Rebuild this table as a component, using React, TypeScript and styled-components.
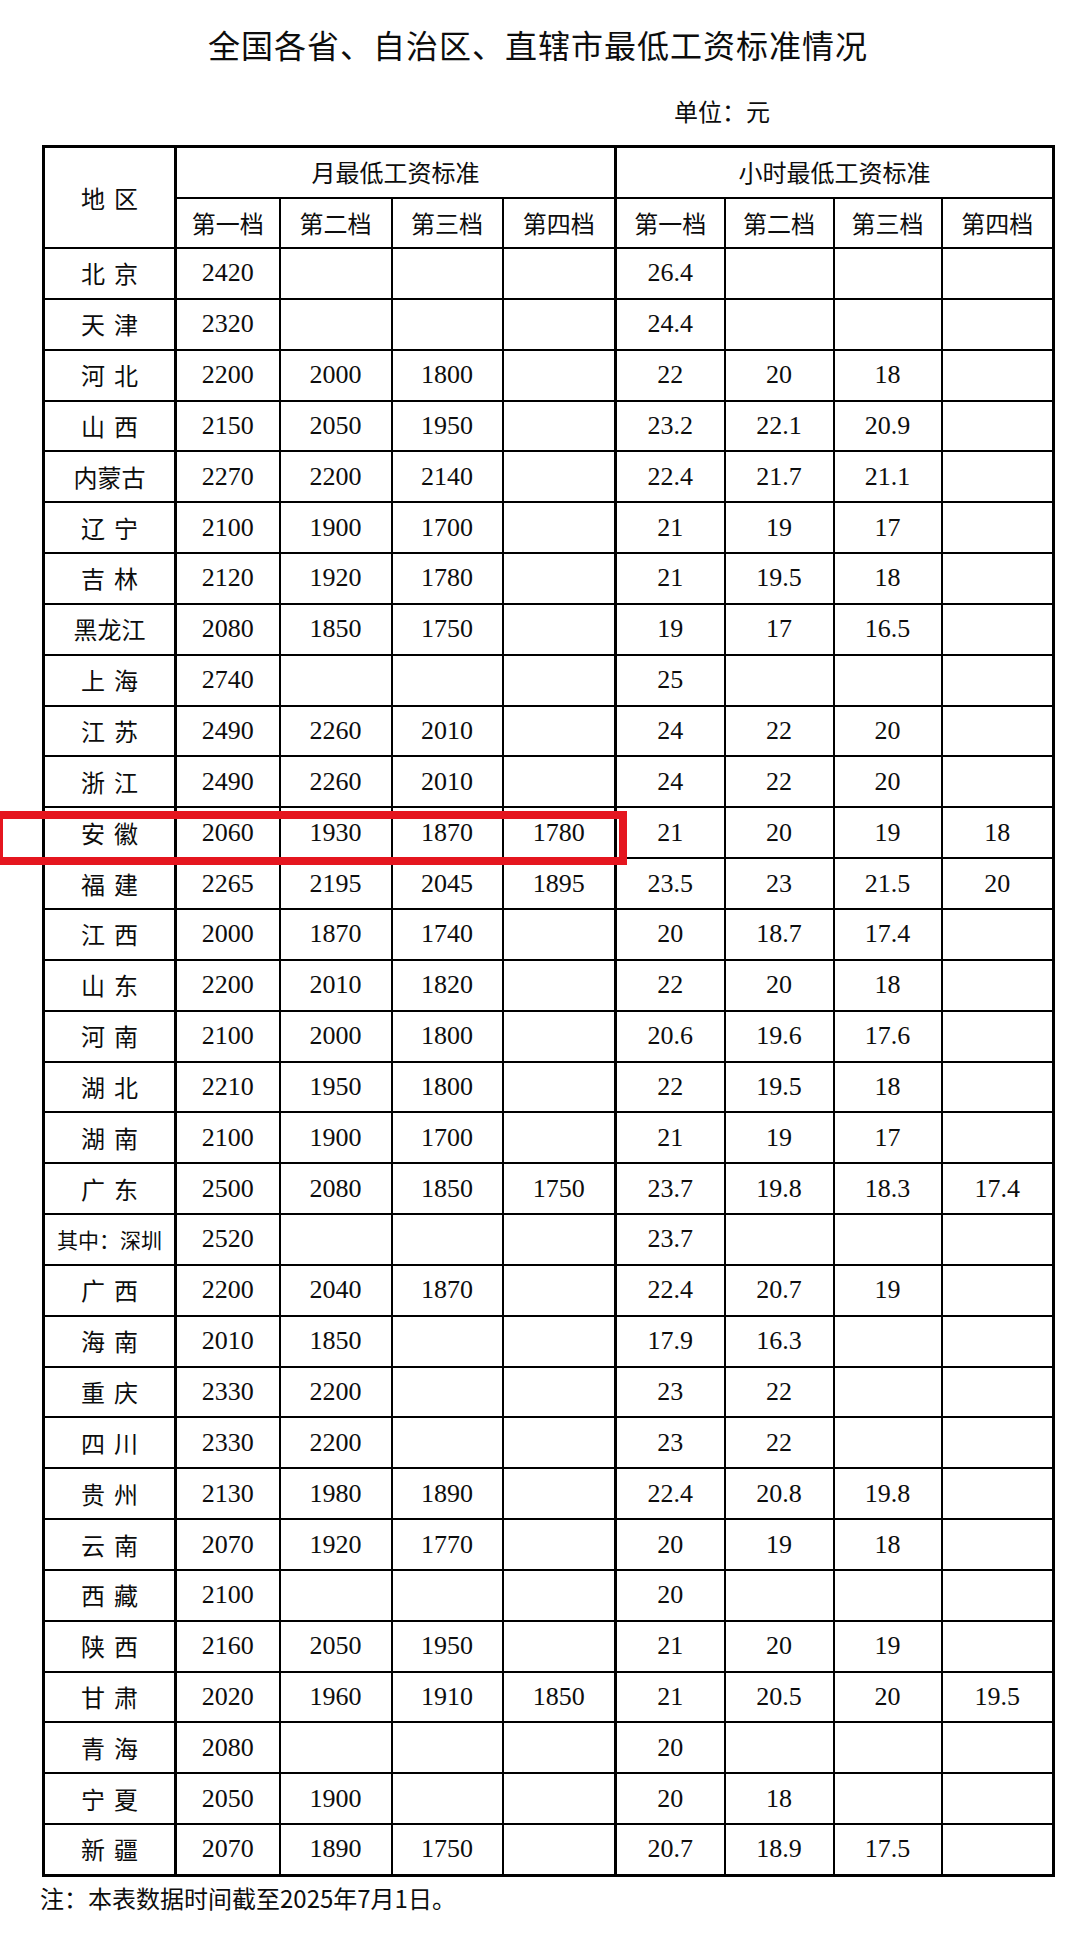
import React from "react";
import styled, { createGlobalStyle } from "styled-components";

const GlobalStyle = createGlobalStyle`
  html,
  body {
    margin: 0;
    padding: 0;
    background: #fff;
  }
`;

const cjk = `"Noto Sans CJK SC", "Noto Sans", sans-serif`;

const Page = styled.div`
  position: relative;
  width: 1076px;
  min-height: 1934px;
  background: #fff;
  color: #0d0d0d;
  font-family: ${cjk};
  overflow: hidden;
`;

const Title = styled.h1`
  margin: 0;
  padding-top: 24px;
  font: 400 32px/40px ${cjk};
  letter-spacing: 1px;
  text-align: center;
`;

const Unit = styled.div`
  margin-top: 32px;
  padding-left: 674px;
  font: 400 24px/30px ${cjk};
`;

const Table = styled.table`
  margin: 19px 0 0 42px;
  width: 1013px;
  border-collapse: collapse;
  table-layout: fixed;
  border: 3px solid #000;
`;

const HeadRow = styled.tr<{ $h: number }>`
  height: ${(p) => p.$h}px;
`;

const DataRow = styled.tr`
  height: 50.85px;
`;

const Cell = styled.td<{ $sep?: boolean }>`
  padding: 0;
  border: 2px solid #000;
  ${(p) => (p.$sep ? "border-right-width: 3px;" : "")}
  text-align: center;
  vertical-align: middle;
  line-height: 1;
  white-space: nowrap;
`;

const HeadCell = styled(Cell)`
  font: 400 24px/1 ${cjk};
`;

const RegionCell = styled(Cell)<{ $spaced?: boolean; $small?: boolean }>`
  font: 400 ${(p) => (p.$small ? 21 : 24)}px/1 ${cjk};
  letter-spacing: ${(p) => (p.$spaced ? "9px" : "0")};
  padding-left: ${(p) => (p.$spaced ? "9px" : "0")};
`;

const NumCell = styled(Cell)`
  font: 400 26px/1 "Liberation Serif", "Times New Roman", serif;
`;

const Highlight = styled.div`
  position: absolute;
  left: -5px;
  top: 811px;
  width: 632px;
  height: 54px;
  box-sizing: border-box;
  border: 8px solid #e5161f;
  pointer-events: none;
`;

const Note = styled.p`
  margin: 6px 0 0;
  padding-left: 40px;
  font: 400 24px/30px ${cjk};
`;

type Row = [string, string[], string[]];

const rows: Row[] = [
  ["北京", ["2420"], ["26.4"]],
  ["天津", ["2320"], ["24.4"]],
  ["河北", ["2200", "2000", "1800"], ["22", "20", "18"]],
  ["山西", ["2150", "2050", "1950"], ["23.2", "22.1", "20.9"]],
  ["内蒙古", ["2270", "2200", "2140"], ["22.4", "21.7", "21.1"]],
  ["辽宁", ["2100", "1900", "1700"], ["21", "19", "17"]],
  ["吉林", ["2120", "1920", "1780"], ["21", "19.5", "18"]],
  ["黑龙江", ["2080", "1850", "1750"], ["19", "17", "16.5"]],
  ["上海", ["2740"], ["25"]],
  ["江苏", ["2490", "2260", "2010"], ["24", "22", "20"]],
  ["浙江", ["2490", "2260", "2010"], ["24", "22", "20"]],
  ["安徽", ["2060", "1930", "1870", "1780"], ["21", "20", "19", "18"]],
  ["福建", ["2265", "2195", "2045", "1895"], ["23.5", "23", "21.5", "20"]],
  ["江西", ["2000", "1870", "1740"], ["20", "18.7", "17.4"]],
  ["山东", ["2200", "2010", "1820"], ["22", "20", "18"]],
  ["河南", ["2100", "2000", "1800"], ["20.6", "19.6", "17.6"]],
  ["湖北", ["2210", "1950", "1800"], ["22", "19.5", "18"]],
  ["湖南", ["2100", "1900", "1700"], ["21", "19", "17"]],
  ["广东", ["2500", "2080", "1850", "1750"], ["23.7", "19.8", "18.3", "17.4"]],
  ["其中：深圳", ["2520"], ["23.7"]],
  ["广西", ["2200", "2040", "1870"], ["22.4", "20.7", "19"]],
  ["海南", ["2010", "1850"], ["17.9", "16.3"]],
  ["重庆", ["2330", "2200"], ["23", "22"]],
  ["四川", ["2330", "2200"], ["23", "22"]],
  ["贵州", ["2130", "1980", "1890"], ["22.4", "20.8", "19.8"]],
  ["云南", ["2070", "1920", "1770"], ["20", "19", "18"]],
  ["西藏", ["2100"], ["20"]],
  ["陕西", ["2160", "2050", "1950"], ["21", "20", "19"]],
  ["甘肃", ["2020", "1960", "1910", "1850"], ["21", "20.5", "20", "19.5"]],
  ["青海", ["2080"], ["20"]],
  ["宁夏", ["2050", "1900"], ["20", "18"]],
  ["新疆", ["2070", "1890", "1750"], ["20.7", "18.9", "17.5"]],
];

const colWidths = [132, 104, 112, 111, 113, 109, 109, 108, 112];
const tiers = ["第一档", "第二档", "第三档", "第四档"];

const pad = (vals: string[]) => [0, 1, 2, 3].map((i) => vals[i] ?? "");

export default function App() {
  return (
    <Page>
      <GlobalStyle />
      <Title>全国各省、自治区、直辖市最低工资标准情况</Title>
      <Unit>单位：元</Unit>
      <Table>
        <colgroup>
          {colWidths.map((w, i) => (
            <col key={i} style={{ width: w }} />
          ))}
        </colgroup>
        <thead>
          <HeadRow $h={51}>
            <RegionCell as="th" rowSpan={2} $sep $spaced>
              地区
            </RegionCell>
            <HeadCell as="th" colSpan={4} $sep>
              月最低工资标准
            </HeadCell>
            <HeadCell as="th" colSpan={4}>
              小时最低工资标准
            </HeadCell>
          </HeadRow>
          <HeadRow $h={50.5}>
            {tiers.map((t, i) => (
              <HeadCell as="th" key={"m" + t} $sep={i === 3}>
                {t}
              </HeadCell>
            ))}
            {tiers.map((t) => (
              <HeadCell as="th" key={"h" + t}>
                {t}
              </HeadCell>
            ))}
          </HeadRow>
        </thead>
        <tbody>
          {rows.map(([name, month, hour]) => (
            <DataRow key={name}>
              <RegionCell
                $sep
                $spaced={name.length === 2}
                $small={name.length > 3}
              >
                {name}
              </RegionCell>
              {pad(month).map((v, i) => (
                <NumCell key={"m" + i} $sep={i === 3}>
                  {v}
                </NumCell>
              ))}
              {pad(hour).map((v, i) => (
                <NumCell key={"h" + i}>{v}</NumCell>
              ))}
            </DataRow>
          ))}
        </tbody>
      </Table>
      <Note>注：本表数据时间截至2025年7月1日。</Note>
      <Highlight />
    </Page>
  );
}
